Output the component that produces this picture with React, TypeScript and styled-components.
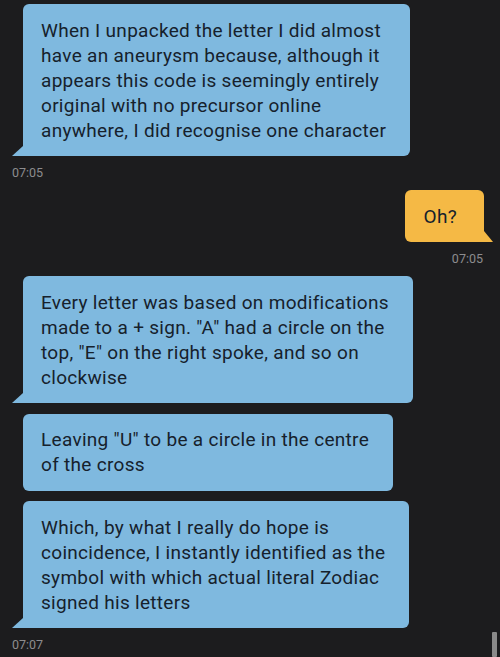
import React from "react"
import styled, { createGlobalStyle, css } from "styled-components"

const GlobalStyle = createGlobalStyle`
    html, body {
        margin: 0;
        padding: 0;
        background: #1c1c1e;
    }
    body {
        font-family: Roboto, "Noto Sans", "Liberation Sans", sans-serif;
        overflow: hidden;
    }
`

const Thread = styled.main`
    position: relative;
    width: 500px;
    height: 657px;
    box-sizing: border-box;
    padding: 4px 0 0;
    display: flex;
    flex-direction: column;
    overflow: hidden;
`

const Group = styled.section<{ $mine?: boolean }>`
    display: flex;
    flex-direction: column;
    align-items: ${(p) => (p.$mine ? "flex-end" : "flex-start")};
    gap: 10.5px;
    padding: ${(p) => (p.$mine ? "0 16px 0 0" : "0 0 0 23px")};
`

const Bubble = styled.div<{ $mine?: boolean; $tail?: boolean }>`
    position: relative;
    box-sizing: border-box;
    padding: 13.5px 24px 13.5px 18px;
    border-radius: 6px;
    font-size: 19px;
    letter-spacing: 0.3px;
    line-height: 25px;
    color: #16212c;
    background: ${(p) => (p.$mine ? "#f5b945" : "#7fb9df")};
    white-space: nowrap;

    ${(p) =>
        p.$tail &&
        !p.$mine &&
        css`
            border-bottom-left-radius: 0;
            &::after {
                content: "";
                position: absolute;
                left: -11px;
                bottom: 0;
                width: 11px;
                height: 10px;
                background: inherit;
                clip-path: polygon(100% 0, 100% 100%, 0 100%);
            }
        `}

    ${(p) =>
        p.$tail &&
        p.$mine &&
        css`
            padding-right: 27px;
            padding-left: 19px;
            border-bottom-right-radius: 0;
            &::after {
                content: "";
                position: absolute;
                right: -9px;
                bottom: 0;
                width: 9px;
                height: 11px;
                background: inherit;
                clip-path: polygon(0 0, 100% 100%, 0 100%);
            }
        `}
`

const Line = styled.span`
    display: block;
`

const Time = styled.div<{ $mine?: boolean }>`
    font-size: 12.5px;
    line-height: 14px;
    color: #8c8c8e;
    margin: 10px 0 10px;
    padding: ${(p) => (p.$mine ? "0 17px 0 0" : "0 0 0 12px")};
    text-align: ${(p) => (p.$mine ? "right" : "left")};
`

const ScrollThumb = styled.div`
    position: absolute;
    right: 3px;
    bottom: 0;
    width: 5px;
    height: 25px;
    background: #8a8a8a;
    border-radius: 1px;
`

type Msg = { lines: string[]; tail?: boolean }

const first: Msg[] = [
    {
        lines: [
            "When I unpacked the letter I did almost",
            "have an aneurysm because, although it",
            "appears this code is seemingly entirely",
            "original with no precursor online",
            "anywhere, I did recognise one character",
        ],
        tail: true,
    },
]

const last: Msg[] = [
    {
        lines: [
            "Every letter was based on modifications",
            'made to a + sign. "A" had a circle on the',
            'top, "E" on the right spoke, and so on',
            "clockwise",
        ],
        tail: true,
    },
    {
        lines: ['Leaving "U" to be a circle in the centre', "of the cross"],
    },
    {
        lines: [
            "Which, by what I really do hope is",
            "coincidence, I instantly identified as the",
            "symbol with which actual literal Zodiac",
            "signed his letters",
        ],
        tail: true,
    },
]

const Messages = ({ items }: { items: Msg[] }) => (
    <Group>
        {items.map((m, i) => (
            <Bubble key={i} $tail={m.tail}>
                {m.lines.map((l) => (
                    <Line key={l}>{l}</Line>
                ))}
            </Bubble>
        ))}
    </Group>
)

const App = () => {
    return (
        <Thread>
            <GlobalStyle />
            <Messages items={first} />
            <Time>07:05</Time>
            <Group $mine>
                <Bubble $mine $tail>
                    Oh?
                </Bubble>
            </Group>
            <Time $mine>07:05</Time>
            <Messages items={last} />
            <Time>07:07</Time>
            <ScrollThumb />
        </Thread>
    )
}

export default App
